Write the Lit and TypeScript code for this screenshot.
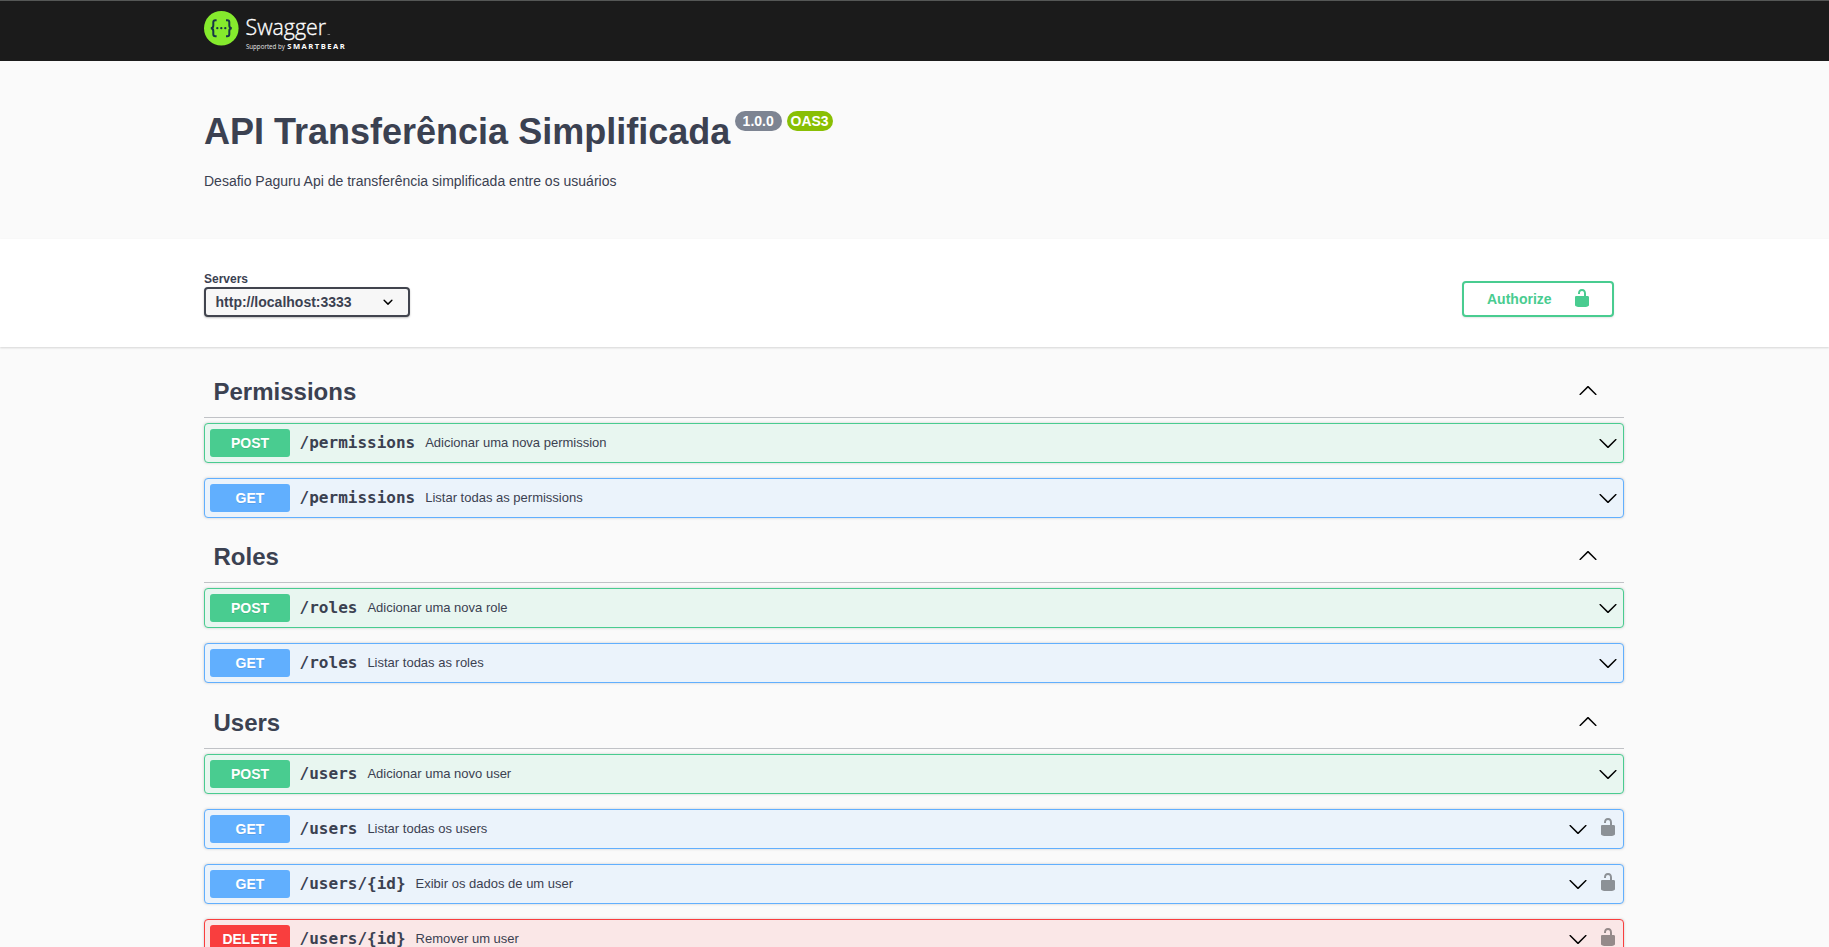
import { LitElement, html, css, svg } from "lit";
import { customElement, property } from "lit/decorators.js";

const UNLOCKED =
  "M15.8 8H14V5.6C14 2.703 12.665 1 10 1 7.334 1 6 2.703 6 5.6V6h2v-.801C8 3.754 8.797 3 10 3c1.203 0 2 .754 2 2.199V8H4c-.553 0-1 .646-1 1.199V17c0 .549.428 1.139.951 1.307l1.197.387C5.672 18.861 6.55 19 7.1 19h5.8c.549 0 1.428-.139 1.951-.307l1.196-.387c.524-.167.953-.757.953-1.306V9.199C17 8.646 16.352 8 15.8 8z";
const ARROW_DOWN =
  "M17.418 6.109c.272-.268.709-.268.979 0s.271.701 0 .969l-7.908 7.83c-.27.268-.707.268-.979 0l-7.908-7.83c-.27-.268-.27-.701 0-.969.271-.268.709-.268.979 0L10 13.25l7.418-7.141z";
const ARROW_UP =
  "M17.418 14.908c.272.268.709.268.979 0s.271-.701 0-.969l-7.908-7.83c-.27-.268-.707-.268-.979 0l-7.908 7.83c-.27.268-.27.701 0 .969.271.268.709.268.979 0L10 7.767l7.418 7.141z";
const SELECT_ARROW =
  "M13.418 7.859a.695.695 0 0 1 .978 0 .68.68 0 0 1 0 .969l-3.908 3.83a.697.697 0 0 1-.979 0l-3.908-3.83a.68.68 0 0 1 0-.969.695.695 0 0 1 .978 0L10 11l3.418-3.141z";

const icon = (d: string, cls = "") =>
  html`<svg class="icon ${cls}" viewBox="0 0 20 20" width="20" height="20">${svg`<path d=${d} />`}</svg>`;

interface Operation {
  method: "post" | "get" | "delete";
  path: string;
  summary: string;
  secured?: boolean;
}

interface Tag {
  name: string;
  operations: Operation[];
}

const TAGS: Tag[] = [
  {
    name: "Permissions",
    operations: [
      { method: "post", path: "/permissions", summary: "Adicionar uma nova permission" },
      { method: "get", path: "/permissions", summary: "Listar todas as permissions" },
    ],
  },
  {
    name: "Roles",
    operations: [
      { method: "post", path: "/roles", summary: "Adicionar uma nova role" },
      { method: "get", path: "/roles", summary: "Listar todas as roles" },
    ],
  },
  {
    name: "Users",
    operations: [
      { method: "post", path: "/users", summary: "Adicionar uma novo user" },
      { method: "get", path: "/users", summary: "Listar todas os users", secured: true },
      { method: "get", path: "/users/{id}", summary: "Exibir os dados de um user", secured: true },
      { method: "delete", path: "/users/{id}", summary: "Remover um user", secured: true },
    ],
  },
];

@customElement("op-block")
class OpBlock extends LitElement {
  @property({ attribute: false }) op!: Operation;

  static styles = css`
    :host { display: block; margin-bottom: 15px; }
    .block {
      box-sizing: border-box;
      height: 40px;
      display: flex;
      align-items: center;
      padding: 0 5px;
      border: 1px solid;
      border-radius: 4px;
      box-shadow: 0 0 3px rgba(0, 0, 0, 0.19);
      color: #3b4151;
    }
    .post { border-color: #49cc90; background: #e8f6f0; }
    .get { border-color: #61affe; background: #ebf3fb; }
    .delete { border-color: #f93e3e; background: #fae7e7; }
    .method {
      width: 80px;
      height: 28px;
      line-height: 28px;
      border-radius: 3px;
      text-align: center;
      color: #fff;
      font-size: 14px;
      font-weight: 700;
      text-shadow: 0 1px 0 rgba(0, 0, 0, 0.1);
    }
    .post .method { background: #49cc90; }
    .get .method { background: #61affe; }
    .delete .method { background: #f93e3e; }
    .path {
      padding: 0 10px 1px 9.6px;
      font: 600 16px/19px "DejaVu Sans Mono", monospace;
    }
    .summary { flex: 1; padding-bottom: 1px; font-size: 13px; line-height: 15px; }
    .icon { display: block; fill: #000; }
    .lock { margin: -4px 0 0 10px; opacity: 0.4; }
  `;

  render() {
    const { method, path, summary, secured } = this.op;
    return html`<div class="block ${method}">
      <span class="method">${method.toUpperCase()}</span>
      <span class="path">${path}</span>
      <span class="summary">${summary}</span>
      ${icon(ARROW_DOWN)} ${secured ? icon(UNLOCKED, "lock") : ""}
    </div>`;
  }
}

@customElement("swagger-logo")
class SwaggerLogo extends LitElement {
  static styles = css`
    :host { display: block; }
    svg { display: block; }
    .name { font: 300 22.5px "Open Sans", "Noto Sans", sans-serif; fill: #fff; stroke: #fff; stroke-width: 0.35; }
    .by { font: 400 6.3px "Open Sans", "Noto Sans", sans-serif; fill: #e4e4e4; }
    .company { font: 700 7.6px "Open Sans", "Noto Sans", sans-serif; fill: #fff; }
    .brace { fill: none; stroke: #173647; stroke-width: 2; }
    .dot { fill: #173647; }
  `;

  render() {
    return html`<svg width="142" height="42" viewBox="0 0 142 42">
      <circle cx="17.3" cy="18.3" r="17.3" fill="#85ea2d" />
      <path class="brace" d="M12.6 10.2h-1.3q-2 0-2 2v3.3q0 2.7-2.5 2.7q2.5 0 2.5 2.7v3.3q0 2 2 2h1.3" />
      <path class="brace" d="M22 10.2h1.3q2 0 2 2v3.3q0 2.7 2.5 2.7q-2.5 0-2.5 2.7v3.3q0 2-2 2h-1.3" />
      <circle class="dot" cx="13.3" cy="18.2" r="1.15" />
      <circle class="dot" cx="17.3" cy="18.2" r="1.15" />
      <circle class="dot" cx="21.3" cy="18.2" r="1.15" />
      <text class="name" x="41.5" y="25.2" textLength="80.5" lengthAdjust="spacingAndGlyphs">Swagger</text>
      <rect x="123.5" y="24" width="2.6" height="1" fill="#777" />
      <text class="by" x="41.9" y="39.4" textLength="39" lengthAdjust="spacingAndGlyphs">Supported by</text>
      <text class="company" x="83.3" y="39.3" textLength="57.4" lengthAdjust="spacing">SMARTBEAR</text>
    </svg>`;
  }
}

@customElement("app-root")
class AppRoot extends LitElement {
  static styles = css`
    :host {
      display: block;
      height: 947px;
      overflow: hidden;
      background: #fafafa;
      color: #3b4151;
      font-family: "Liberation Sans", Arial, sans-serif;
    }
    .wrapper { margin: 0 205px 0 204px; }
    .topbar {
      box-sizing: border-box;
      height: 61px;
      padding-top: 9px;
      border-top: 1px solid #555756;
      background: #1b1b1b;
    }
    .info { box-sizing: border-box; height: 178px; padding-top: 50px; }
    .title {
      display: flex;
      align-items: flex-start;
      margin: 0;
      font-size: 36px;
      line-height: 41px;
      font-weight: 700;
    }
    .badge {
      height: 20px;
      margin-left: 5px;
      padding: 0 8px 0 7.4px;
      border-radius: 57px;
      background: #7d8492;
      color: #fff;
      font-size: 14px;
      line-height: 20px;
    }
    .badge.oas { padding: 0 4.2px 0 3.8px; background: #89bf04; }
    .description { margin: 20px 0 0; font-size: 14px; line-height: 18px; }
    .scheme {
      height: 108px;
      background: #fff;
      box-shadow: 0 1px 2px 0 rgba(0, 0, 0, 0.15);
    }
    .scheme-row { display: flex; justify-content: space-between; padding-top: 33px; }
    .servers { font-size: 12px; font-weight: 700; line-height: 14px; }
    .select {
      box-sizing: border-box;
      width: 206px;
      height: 30px;
      margin-top: 1px;
      padding: 0 10px 0 9.5px;
      display: flex;
      align-items: center;
      justify-content: space-between;
      border: 2px solid #41444e;
      border-radius: 4px;
      background: #f7f7f7;
      box-shadow: 0 1px 2px 0 rgba(0, 0, 0, 0.25);
      font-size: 14px;
      line-height: 16px;
    }
    .authorize {
      box-sizing: border-box;
      width: 152px;
      height: 36px;
      margin: 9px 10px 0 0;
      padding: 0 20px 0 23px;
      display: flex;
      align-items: center;
      justify-content: space-between;
      border: 2px solid #49cc90;
      border-radius: 4px;
      background: #fff;
      box-shadow: 0 1px 2px rgba(0, 0, 0, 0.1);
      color: #49cc90;
      fill: #49cc90;
      font-size: 14px;
      line-height: 16px;
      font-weight: 700;
    }
    .icon { display: block; }
    .raised { margin-top: -2px; }
    .tags { padding-top: 20px; }
    .tag {
      box-sizing: border-box;
      height: 51px;
      margin-bottom: 5px;
      padding: 0 26px 12px 9.5px;
      display: flex;
      align-items: flex-end;
      justify-content: space-between;
      border-bottom: 1px solid rgba(59, 65, 81, 0.3);
      font-size: 24px;
      line-height: 27px;
      font-weight: 700;
    }
    .group:nth-child(even) .tag { height: 50px; }
    .tag .icon { margin-bottom: 5px; }
  `;

  render() {
    return html`
      <div class="topbar"><div class="wrapper"><swagger-logo></swagger-logo></div></div>
      <div class="wrapper info">
        <h2 class="title">API Transferência Simplificada<span class="badge">1.0.0</span><span class="badge oas">OAS3</span></h2>
        <p class="description">Desafio Paguru Api de transferência simplificada entre os usuários</p>
      </div>
      <div class="scheme">
        <div class="wrapper scheme-row">
          <div class="servers">
            Servers
            <div class="select"><span>http://localhost:3333</span>${icon(SELECT_ARROW)}</div>
          </div>
          <div class="authorize"><span>Authorize</span>${icon(UNLOCKED, "raised")}</div>
        </div>
      </div>
      <div class="wrapper tags">
        ${TAGS.map(
          (tag) => html`<section class="group">
            <div class="tag"><span>${tag.name}</span>${icon(ARROW_UP)}</div>
            ${tag.operations.map((op) => html`<op-block .op=${op}></op-block>`)}
          </section>`
        )}
      </div>
    `;
  }
}
